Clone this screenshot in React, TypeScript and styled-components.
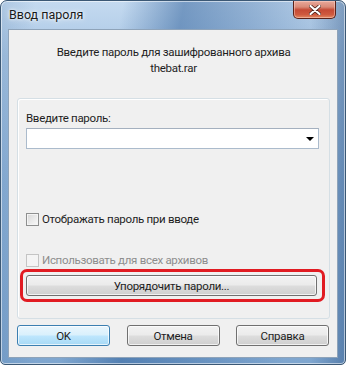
import styled, { createGlobalStyle } from 'styled-components'

const GlobalStyle = createGlobalStyle`
   html, body {
      margin: 0;
      padding: 0;
      background: #ffffff;
   }
   body {
      font-family: Roboto, 'Liberation Sans', sans-serif;
      font-size: 11.5px;
      letter-spacing: -0.3px;
   }
`

const Frame = styled.div`
   width: 346px;
   height: 365px;
   box-sizing: border-box;
   display: flex;
   flex-direction: column;
   border: 1px solid #3b5875;
   border-radius: 7px 7px 5px 5px;
   overflow: hidden;
   background:
      linear-gradient(
         100deg,
         rgba(255, 255, 255, 0) 30%,
         rgba(40, 90, 150, 0.5) 45%,
         rgba(40, 90, 150, 0.3) 62%,
         rgba(255, 255, 255, 0) 85%
      ),
      linear-gradient(90deg, rgba(50, 95, 145, 0.15) 0%, rgba(0, 0, 0, 0) 10%, rgba(0, 0, 0, 0) 90%, rgba(40, 80, 130, 0.45) 100%),
      linear-gradient(180deg, #c4daf0 0%, #a9c6e4 15%, #8fb3d9 50%, #7fa6cf 100%);
   box-shadow: inset 0 0 0 1px rgba(255, 255, 255, 0.55);
`

const TitleBar = styled.div`
   height: 28px;
   display: flex;
   align-items: flex-start;
   justify-content: space-between;
   padding: 0 9px 0 8px;
   box-sizing: border-box;
`

const Title = styled.span`
   margin-top: 6px;
   color: #1a1a1a;
   font-size: 12.5px;
   letter-spacing: 0;
   text-shadow: 0 0 6px rgba(255, 255, 255, 0.9), 0 0 3px #fff;
`

const CloseButton = styled.div`
   width: 43px;
   height: 18px;
   box-sizing: border-box;
   display: grid;
   place-items: center;
   border: 1px solid #5b2219;
   border-top: none;
   border-radius: 0 0 5px 5px;
   background: linear-gradient(180deg, #e9a99b 0%, #d98a78 35%, #c54a35 52%, #cf5a3f 80%, #e38a63 100%);
   box-shadow: inset 0 0 0 1px rgba(255, 220, 210, 0.45);
   & svg {
      display: block;
   }
`

const Client = styled.div`
   flex: 1;
   margin: 0 7px 6px 7px;
   box-sizing: border-box;
   border: 1px solid #8ea3b9;
   background: #f0f0f0;
   display: flex;
   flex-direction: column;
   padding: 0 7px 0 8px;
`

const Prompt = styled.div`
   margin-top: 14px;
   text-align: center;
   line-height: 16px;
   color: #1e1e1e;
`

const GroupBox = styled.div`
   margin-top: 22px;
   height: 221px;
   box-sizing: border-box;
   border: 1px solid #d5dfe5;
   border-radius: 3px;
   box-shadow: inset 1px 1px 0 #ffffff;
   padding: 11px 10px 0 8px;
   display: flex;
   flex-direction: column;
`

const FieldLabel = styled.label`
   line-height: 16px;
   color: #1e1e1e;
`

const Combo = styled.div`
   margin-top: 2px;
   height: 21px;
   box-sizing: border-box;
   border: 1px solid #abbbcc;
   border-top-color: #a4b0bf;
   background: #ffffff;
   display: flex;
   align-items: center;
   justify-content: flex-end;
   padding-right: 4px;
`

const Arrow = styled.span`
   width: 0;
   height: 0;
   border-left: 4px solid transparent;
   border-right: 4px solid transparent;
   border-top: 4px solid #000;
`

const CheckRow = styled.div<{ $disabled?: boolean; $top: number }>`
   margin-top: ${({ $top }) => $top}px;
   display: flex;
   align-items: center;
   gap: 3px;
   line-height: 16px;
   color: ${({ $disabled }) => ($disabled ? '#8d8d8d' : '#1e1e1e')};
`

const CheckBox = styled.span<{ $disabled?: boolean }>`
   width: 13px;
   height: 13px;
   box-sizing: border-box;
   border: 1px solid ${({ $disabled }) => ($disabled ? '#c4c4c4' : '#8e8f8f')};
   background: ${({ $disabled }) =>
      $disabled
         ? '#f4f4f4'
         : 'linear-gradient(135deg, #d6d6d6 0%, #ececec 60%, #fafafa 100%)'};
   box-shadow: inset 0 0 0 1px #f4f4f4;
`

const Highlight = styled.div`
   margin: 1px -6px 0 -6px;
   border: 3px solid #e11b22;
   border-radius: 7px;
   padding: 3px 5px 3px 3px;
`

const Button = styled.button<{ $default?: boolean; $width?: number }>`
   width: ${({ $width }) => ($width ? `${$width}px` : '100%')};
   height: 21px;
   box-sizing: border-box;
   font-family: inherit;
   font-size: 11.5px;
   letter-spacing: inherit;
   color: #1e1e1e;
   padding: 0;
   border-radius: 3px;
   border: 1px solid ${({ $default }) => ($default ? '#3c7fb1' : '#707070')};
   background: ${({ $default }) =>
      $default
         ? 'linear-gradient(180deg, #eaf6fd 0%, #d9f0fc 48%, #bee6fd 52%, #a7d9f5 100%)'
         : 'linear-gradient(180deg, #f2f2f2 0%, #ebebeb 48%, #dddddd 52%, #cfcfcf 100%)'};
   box-shadow: inset 0 0 0 1px rgba(255, 255, 255, 0.7);
`

const ButtonRow = styled.div`
   margin-top: 6px;
   display: flex;
   justify-content: space-between;
   padding-right: 1px;
`

export default function App() {
   return (
      <>
         <GlobalStyle />
         <Frame>
            <TitleBar>
               <Title>Ввод пароля</Title>
               <CloseButton>
                  <svg width="12" height="10" viewBox="0 0 12 10">
                     <path
                        d="M1.5 1 L10.5 9 M10.5 1 L1.5 9"
                        stroke="#4a2018"
                        strokeWidth="3.6"
                        strokeLinecap="round"
                     />
                     <path
                        d="M1.5 1 L10.5 9 M10.5 1 L1.5 9"
                        stroke="#ffffff"
                        strokeWidth="2.2"
                        strokeLinecap="round"
                     />
                  </svg>
               </CloseButton>
            </TitleBar>
            <Client>
               <Prompt>
                  Введите пароль для зашифрованного архива
                  <br />
                  thebat.rar
               </Prompt>
               <GroupBox>
                  <FieldLabel>Введите пароль:</FieldLabel>
                  <Combo>
                     <Arrow />
                  </Combo>
                  <CheckRow $top={62}>
                     <CheckBox />
                     Отображать пароль при вводе
                  </CheckRow>
                  <CheckRow $top={25} $disabled>
                     <CheckBox $disabled />
                     Использовать для всех архивов
                  </CheckRow>
                  <Highlight>
                     <Button>Упорядочить пароли...</Button>
                  </Highlight>
               </GroupBox>
               <ButtonRow>
                  <Button $default $width={93}>
                     OK
                  </Button>
                  <Button $width={93}>Отмена</Button>
                  <Button $width={93}>Справка</Button>
               </ButtonRow>
            </Client>
         </Frame>
      </>
   )
}
